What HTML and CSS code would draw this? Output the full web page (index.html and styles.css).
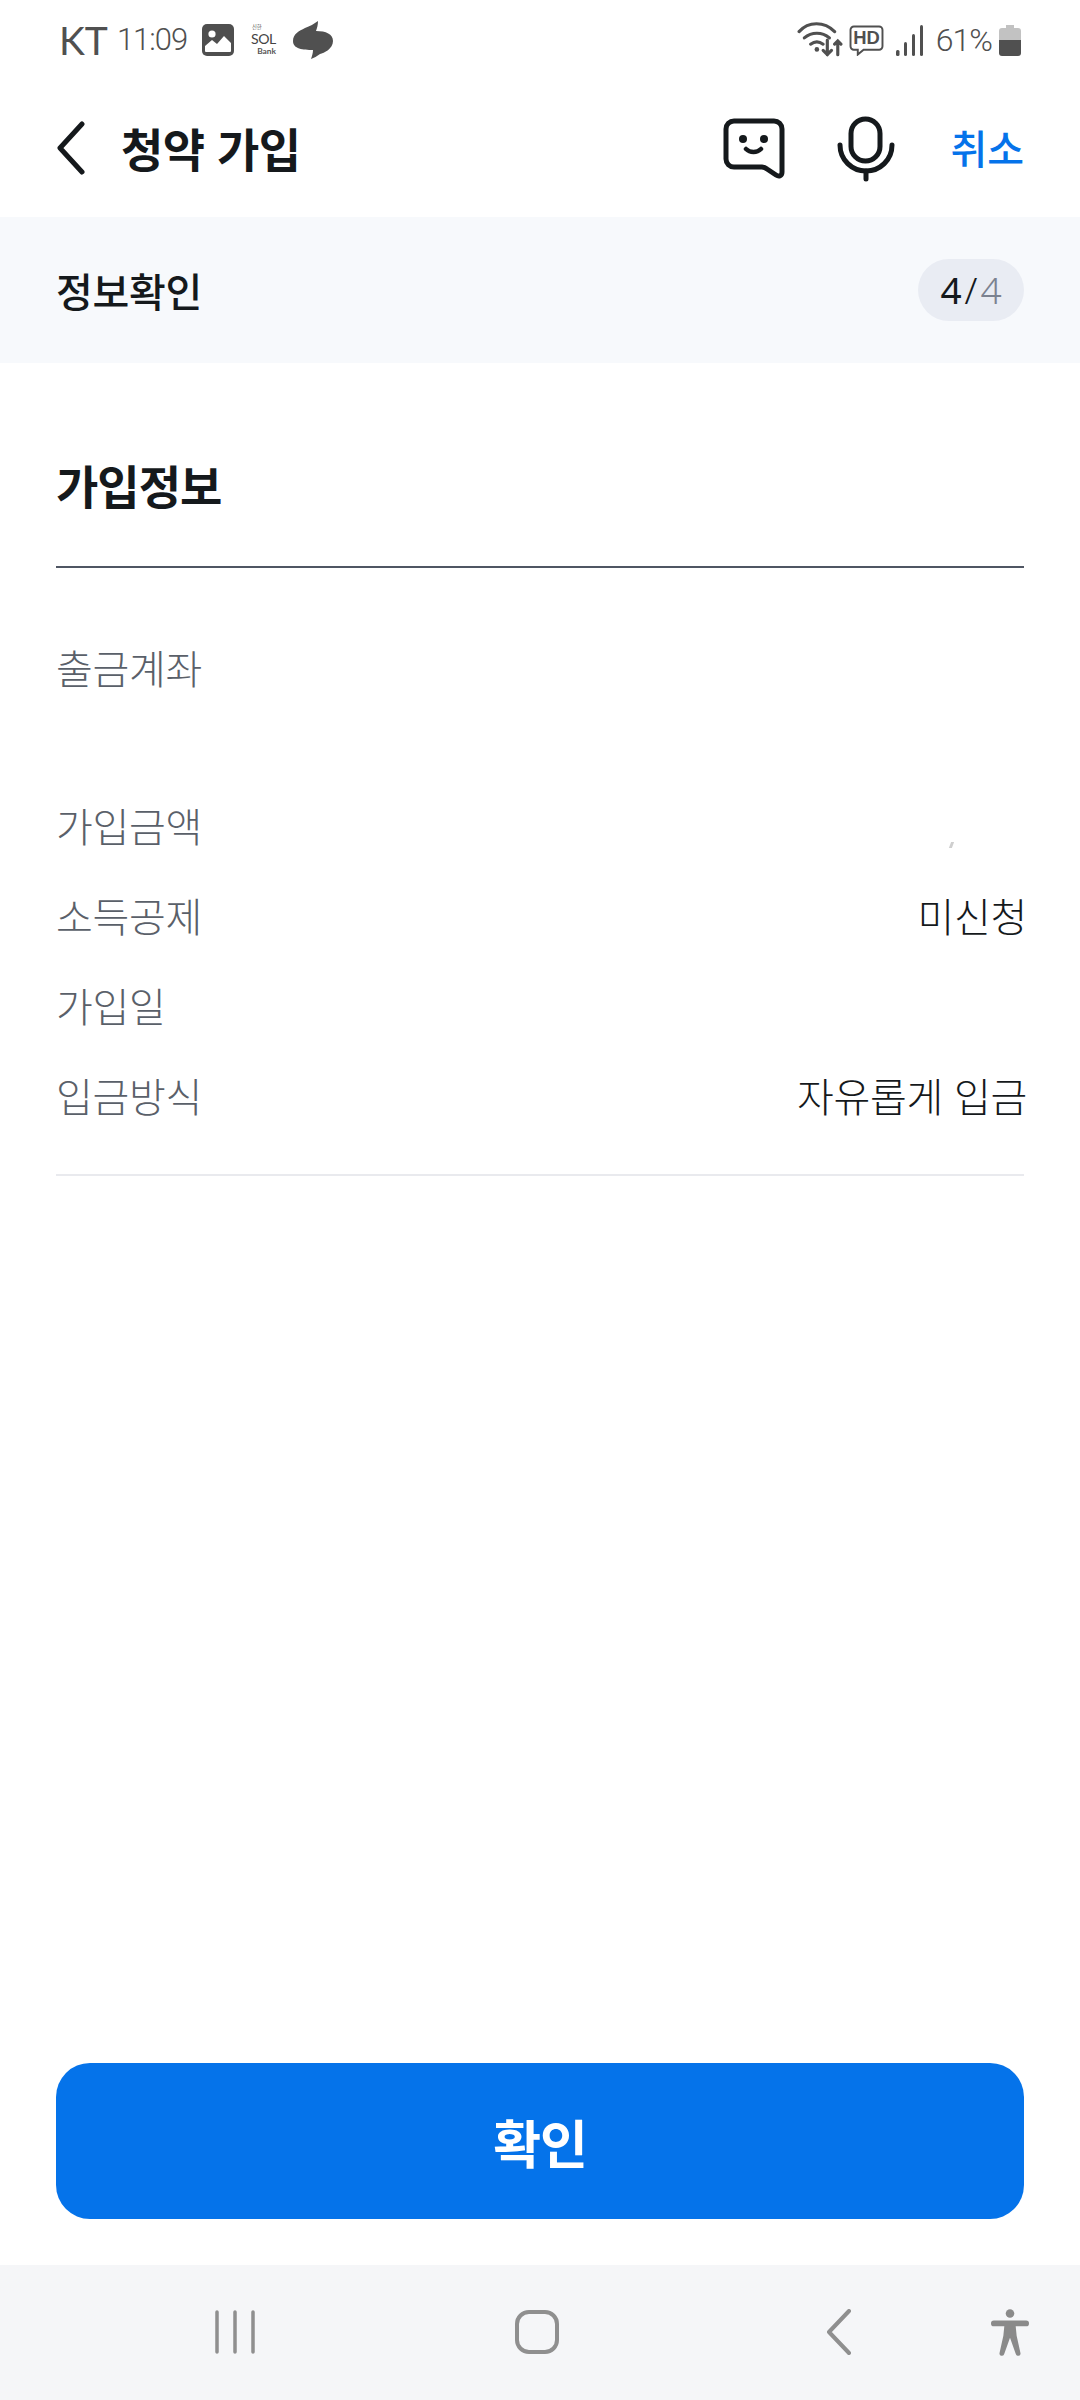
FILE: index.html
```html
<!DOCTYPE html>
<html lang="ko">
<head>
<meta charset="utf-8">
<title>청약 가입</title>
<link rel="stylesheet" href="styles.css">
</head>
<body>
<div class="status">
  <div class="status-left">
    <span class="carrier">KT</span>
    <span class="clock">11:09</span>
    <svg class="ic-gallery" viewBox="0 0 32 32"><rect width="32" height="32" rx="5" fill="#4f4f4f"/><circle cx="10" cy="10" r="3.6" fill="#fff"/><path d="M3 27v-5l7-6 5 4 7-8 7 7v8a1 1 0 0 1-1 1H4a1 1 0 0 1-1-1z" fill="#fff"/></svg>
    <svg class="ic-sol" viewBox="0 0 34 38"><text x="1" y="7" class="sol-a">신한</text><text x="0" y="23" class="sol-b">SOL</text><text x="7" y="35" class="sol-c">Bank</text></svg>
    <svg class="ic-swirl" viewBox="0 0 40 38"><path d="M25 0C25 4 24 7 23 10 33 10 40 13 40 20 40 28 31 32 27 33 24 35 21 37 18 38 19 35 20 32 20 29 10 29 0 28 0 20 0 13 6 10 12 7 17 5 21 3 25 0z" fill="#505050"/></svg>
  </div>
  <div class="status-right">
    <svg class="ic-wifi" viewBox="0 0 44 34"><g fill="none" stroke="#505050" stroke-width="3" stroke-linecap="round"><path d="M2 9C11-1 26-1 36 9"/><path d="M7 15c7-6 17-6 24 0"/><path d="M13 21c4-3 8-3 12 0"/><path d="M29 17v14M25 27l4 4 4-4"/><path d="M39 31V18M36 21l3-3 3 3"/></g><circle cx="19" cy="26" r="2.2" fill="#505050"/></svg>
    <svg class="ic-hd" viewBox="0 0 36 32"><path d="M5 1.500h26a3.500 3.500 0 0 1 3.500 3.500v17a3.500 3.500 0 0 1-3.500 3.500H15l-6 5v-5H5A3.500 3.500 0 0 1 1.500 22V5A3.500 3.500 0 0 1 5 1.500z" fill="none" stroke="#505050" stroke-width="2"/><text x="18" y="20" class="hd-text">HD</text></svg>
    <svg class="ic-signal" viewBox="0 0 27 31"><g fill="#505050"><rect x="0" y="25" width="3.500" height="6" rx="1.500"/><rect x="8" y="17" width="3" height="14" rx="1.500"/><rect x="16" y="9" width="3" height="22" rx="1.500"/><rect x="24" y="0" width="3" height="31" rx="1.500"/></g></svg>
    <span class="pct">61%</span>
    <svg class="ic-batt" viewBox="0 0 22 31"><path d="M7 0h8v3h4a3 3 0 0 1 3 3v9H0V6a3 3 0 0 1 3-3h4z" fill="#c2c2c2"/><path d="M0 15h22v13a3 3 0 0 1-3 3H3a3 3 0 0 1-3-3z" fill="#505050"/></svg>
  </div>
</div>

<header class="appbar">
  <svg class="ic-back" viewBox="0 0 30 54"><path d="M26 3L4 27l22 24" fill="none" stroke="#15191c" stroke-width="5" stroke-linecap="round" stroke-linejoin="round"/></svg>
  <h1 class="title">청약 가입</h1>
  <div class="appbar-actions">
    <svg class="ic-chat" viewBox="0 0 62 62"><path d="M11 3h40a8 8 0 0 1 8 8v43c0 4-3 5-6 3l-9-6a10 10 0 0 0-5-2H11a8 8 0 0 1-8-8V11a8 8 0 0 1 8-8z" fill="none" stroke="#15191c" stroke-width="5" stroke-linejoin="round"/><circle cx="20" cy="21" r="4" fill="#15191c"/><circle cx="41" cy="21" r="4" fill="#15191c"/><path d="M23 31c4 4 11 4 15 0" fill="none" stroke="#15191c" stroke-width="4.500" stroke-linecap="round"/></svg>
    <svg class="ic-mic" viewBox="0 0 58 66"><rect x="14" y="3" width="29" height="42" rx="14.500" fill="none" stroke="#15191c" stroke-width="5"/><path d="M3 29c0 15 12 26 26 26s26-11 26-26" fill="none" stroke="#15191c" stroke-width="5" stroke-linecap="round"/><path d="M29 55v8" stroke="#15191c" stroke-width="5" stroke-linecap="round"/></svg>
    <span class="cancel">취소</span>
  </div>
</header>

<section class="step">
  <span class="step-name">정보확인</span>
  <span class="step-badge">4<i class="slash">/</i><em class="total">4</em></span>
</section>

<main class="content">
  <h2 class="section-title">가입정보</h2>
  <dl class="info">
    <div class="row row-account"><dt>출금계좌</dt><dd></dd></div>
    <div class="row"><dt>가입금액</dt><dd><span class="speck"></span></dd></div>
    <div class="row"><dt>소득공제</dt><dd>미신청</dd></div>
    <div class="row"><dt>가입일</dt><dd></dd></div>
    <div class="row"><dt>입금방식</dt><dd>자유롭게 입금</dd></div>
  </dl>
</main>

<div class="action"><button class="confirm">확인</button></div>

<nav class="navbar">
  <svg class="ic-recents" viewBox="0 0 42 44"><g stroke="#8f8f8f" stroke-width="3.500" stroke-linecap="round"><path d="M3 2v40M21 2v40M39 2v40"/></g></svg>
  <svg class="ic-home" viewBox="0 0 44 44"><rect x="2" y="2" width="40" height="40" rx="12" fill="none" stroke="#8f8f8f" stroke-width="4"/></svg>
  <svg class="ic-navback" viewBox="0 0 26 46"><path d="M23 2L3 23l20 21" fill="none" stroke="#8f8f8f" stroke-width="4" stroke-linecap="round" stroke-linejoin="round"/></svg>
  <svg class="ic-access" viewBox="0 0 40 48"><circle cx="20" cy="4.500" r="4.500" fill="#8a8a8a"/><path d="M3 12h34a2 2 0 0 1 0 6H26l1 10 4 18a2 2 0 0 1-5 1l-6-17-6 17a2 2 0 0 1-5-1l4-18 1-10H3a2 2 0 0 1 0-6z" fill="#8a8a8a"/></svg>
</nav>
</body>
</html>
```
FILE: styles.css
```css
* { box-sizing: border-box; margin: 0; padding: 0; }
html, body { height: 100%; }
body {
  width: 1080px;
  height: 2400px;
  display: flex;
  flex-direction: column;
  background: #fff;
  color: #15191c;
  font-family: "Noto Sans CJK KR", "Noto Sans", sans-serif;
  overflow: hidden;
}

.status {
  height: 80px;
  flex: none;
  display: flex;
  justify-content: space-between;
  align-items: center;
  padding: 0 59px 0 59px;
  color: #505050;
  font-family: "Roboto", "Noto Sans", sans-serif;
}
.status-left, .status-right { display: flex; align-items: center; }
.carrier { font-size: 39px; line-height: 40px; font-family: "Lato", sans-serif; }
.clock { font-size: 31px; line-height: 40px; margin-left: 9px; font-weight: 300; letter-spacing: -1px; }
.ic-gallery { width: 32px; height: 32px; margin-left: 15px; }
.ic-sol { width: 30px; height: 34px; margin-left: 17px; }
.sol-a { font-size: 6px; fill: #555; font-family: "Noto Sans CJK KR", sans-serif; }
.sol-b { font-size: 16px; fill: #444; letter-spacing: -0.500px; font-family: "Lato", sans-serif; }
.sol-c { font-size: 9.500px; fill: #555; font-weight: 700; font-family: "Lato", sans-serif; }
.ic-swirl { width: 40px; height: 38px; margin-left: 12px; }
.ic-wifi { width: 46px; height: 36px; }
.ic-hd { width: 35px; height: 31px; margin-left: 6px; }
.hd-text { font-size: 19px; font-weight: 700; fill: #505050; text-anchor: middle; font-family: "Liberation Sans", sans-serif; }
.ic-signal { width: 29px; height: 31px; margin-left: 11px; }
.pct { font-size: 32px; line-height: 40px; margin-left: 12px; font-weight: 300; letter-spacing: -1px; }
.ic-batt { width: 22px; height: 31px; margin-left: 7px; }

.appbar {
  height: 137px;
  flex: none;
  display: flex;
  align-items: center;
  padding: 0 56px;
}
.ic-back { width: 30px; height: 54px; flex: none; margin-bottom: 2px; }
.title { font-size: 46px; line-height: 60px; font-weight: 700; margin: 0 0 4px 35px; letter-spacing: -0.500px; }
.appbar-actions { margin-left: auto; display: flex; align-items: center; }
.ic-chat { width: 62px; height: 62px; }
.ic-mic { width: 58px; height: 66px; margin-left: 52px; }
.cancel { font-size: 40px; line-height: 60px; font-weight: 500; color: #0573ea; margin: 0 0 4px 55px; }

.step {
  height: 146px;
  flex: none;
  background: #f7f9fc;
  display: flex;
  align-items: center;
  justify-content: space-between;
  padding: 0 56px;
}
.step-name { font-size: 40px; line-height: 50px; font-weight: 500; letter-spacing: -0.300px; }
.step-badge {
  width: 106px;
  height: 62px;
  border-radius: 31px;
  background: #e9ecf3;
  display: flex;
  align-items: center;
  justify-content: center;
  font-size: 37px;
  line-height: 50px;
  font-family: "Noto Sans", sans-serif;
}
.slash { font-style: normal; font-weight: 300; margin: 0 3px; }
.total { font-style: normal; font-weight: 300; color: #7b8290; }

.content { flex: 1; padding: 0 56px; }
.section-title {
  font-size: 46px;
  line-height: 64px;
  font-weight: 700;
  letter-spacing: -1px;
  margin-top: 89px;
  height: 116px;
  border-bottom: 2px solid #4f5663;
}
.info { border-bottom: 2px solid #e9eaee; height: 608px; padding-top: 54px; }
.row {
  height: 90px;
  display: flex;
  justify-content: space-between;
  align-items: center;
  font-size: 40px;
  letter-spacing: -0.300px;
}
.row-account { margin-bottom: 68px; }
.row dt { color: #5a6069; font-weight: 300; }
.row dd { color: #15191c; font-weight: 300; margin-right: -3px; }
.speck {
  display: block;
  width: 3px;
  height: 6px;
  background: #cfcfcf;
  margin-right: 74px;
  transform: translateY(20px) skewX(-20deg);
}

.action { flex: none; padding: 0 56px 46px; }
.confirm {
  display: block;
  width: 100%;
  height: 156px;
  border: 0;
  border-radius: 34px;
  background: #0573ea;
  color: #fff;
  font-family: inherit;
  font-size: 52px;
  font-weight: 700;
  letter-spacing: -1px;
}

.navbar {
  height: 135px;
  flex: none;
  background: #f5f6f8;
  display: flex;
  align-items: center;
  padding-bottom: 2px;
  padding-left: 214px;
}
.ic-recents { width: 42px; height: 44px; }
.ic-home { width: 44px; height: 44px; margin-left: 259px; }
.ic-navback { width: 26px; height: 46px; margin-left: 267px; }
.ic-access { width: 38px; height: 48px; margin-left: 139px; }
```
